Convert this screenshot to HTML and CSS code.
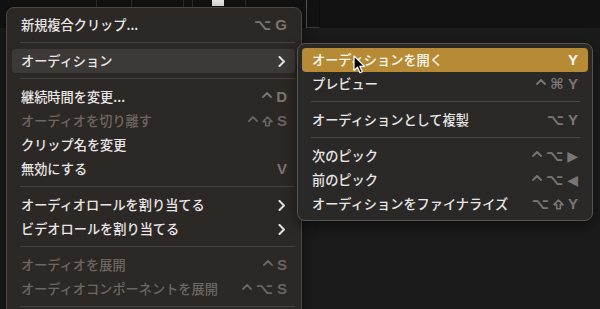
FILE: index.html
```html
<!DOCTYPE html>
<html lang="ja">
<head>
    <meta charset="utf-8" />
    <title>オーディション</title>
    <link rel="stylesheet" href="styles.css">
</head>
<body>
<div class="ruler">
    <span class="cell w1"></span>
    <span class="cell w2"></span>
    <span class="cell w3"></span>
    <span class="cell w4"></span>
    <span class="cell w5"><i class="playhead"></i></span>
    <span class="cell w6"></span>
    <span class="cell w7"></span>
</div>

<div class="menu main">
    <div class="item"><span class="label">新規複合クリップ...</span><span class="key"><span>⌥</span><span>G</span></span></div>
    <div class="sep"></div>
    <div class="item hover"><span class="label">オーディション</span><svg class="chev" width="8" height="11" viewBox="0 0 8 11"><path d="M1.5 1 L6 5.5 L1.5 10" /></svg></div>
    <div class="sep"></div>
    <div class="item"><span class="label">継続時間を変更...</span><span class="key"><svg class="ctrl" width="10" height="6" viewBox="0 0 10 6"><path d="M1 5 L5 1 L9 5" /></svg><span>D</span></span></div>
    <div class="item off"><span class="label">オーディオを切り離す</span><span class="key"><svg class="ctrl" width="10" height="6" viewBox="0 0 10 6"><path d="M1 5 L5 1 L9 5" /></svg><svg class="shift" width="11" height="11" viewBox="0 0 11 11"><path d="M5.5 1 L10 5.6 L7.3 5.6 L7.3 9.8 L3.7 9.8 L3.7 5.6 L1 5.6 Z" /></svg><span>S</span></span></div>
    <div class="item"><span class="label">クリップ名を変更</span></div>
    <div class="item"><span class="label">無効にする</span><span class="key"><span>V</span></span></div>
    <div class="sep"></div>
    <div class="item"><span class="label">オーディオロールを割り当てる</span><svg class="chev" width="8" height="11" viewBox="0 0 8 11"><path d="M1.5 1 L6 5.5 L1.5 10" /></svg></div>
    <div class="item"><span class="label">ビデオロールを割り当てる</span><svg class="chev" width="8" height="11" viewBox="0 0 8 11"><path d="M1.5 1 L6 5.5 L1.5 10" /></svg></div>
    <div class="sep"></div>
    <div class="item off"><span class="label">オーディオを展開</span><span class="key"><svg class="ctrl" width="10" height="6" viewBox="0 0 10 6"><path d="M1 5 L5 1 L9 5" /></svg><span>S</span></span></div>
    <div class="item off"><span class="label">オーディオコンポーネントを展開</span><span class="key"><svg class="ctrl" width="10" height="6" viewBox="0 0 10 6"><path d="M1 5 L5 1 L9 5" /></svg><span>⌥</span><span>S</span></span></div>
    <div class="sep"></div>
    <div class="item off"><span class="label">&nbsp;</span></div>
</div>

<div class="menu sub">
    <div class="item active"><span class="label">オーディションを開く</span><span class="key"><span>Y</span></span></div>
    <div class="item"><span class="label">プレビュー</span><span class="key"><svg class="ctrl" width="10" height="6" viewBox="0 0 10 6"><path d="M1 5 L5 1 L9 5" /></svg><span>⌘</span><span>Y</span></span></div>
    <div class="sep"></div>
    <div class="item"><span class="label">オーディションとして複製</span><span class="key"><span>⌥</span><span>Y</span></span></div>
    <div class="sep"></div>
    <div class="item"><span class="label">次のピック</span><span class="key"><svg class="ctrl" width="10" height="6" viewBox="0 0 10 6"><path d="M1 5 L5 1 L9 5" /></svg><span>⌥</span><span class="tri">▶</span></span></div>
    <div class="item"><span class="label">前のピック</span><span class="key"><svg class="ctrl" width="10" height="6" viewBox="0 0 10 6"><path d="M1 5 L5 1 L9 5" /></svg><span>⌥</span><span class="tri">◀</span></span></div>
    <div class="item"><span class="label">オーディションをファイナライズ</span><span class="key"><span>⌥</span><svg class="shift" width="11" height="11" viewBox="0 0 11 11"><path d="M5.5 1 L10 5.6 L7.3 5.6 L7.3 9.8 L3.7 9.8 L3.7 5.6 L1 5.6 Z" /></svg><span>Y</span></span></div>
</div>

<svg class="cursor" width="13" height="19" viewBox="0 0 13 19">
    <path d="M1 1 L1 15.5 L4.5 12.2 L7 17.8 L9.3 16.8 L6.9 11.4 L11.6 11.4 Z" />
</svg>
</body>
</html>
```

FILE: styles.css
```css
html, body {margin:0;padding:0;}
body {position:relative;width:600px;height:309px;overflow:hidden;background-color:#1b1b1b;font:500 13.2px/24px "Noto Sans CJK JP", "Noto Sans", sans-serif;color:#e9e7e5;}

.ruler {display:flex;height:28px;background-color:#121212;}
.ruler .cell {flex:none;height:100%;border-right:1px solid #2b2b2b;}
.ruler .w1 {width:96px;}
.ruler .w2 {width:34px;}
.ruler .w3 {width:51px;}
.ruler .w4 {width:8px;}
.ruler .w5 {width:52px;}
.ruler .w6 {width:60px;border-right-color:#55524f;}
.ruler .w7 {width:12px;border-bottom:1px solid #3a3836;height:27px;border-right-color:#0c0c0c;}
.ruler .playhead {display:block;width:12px;height:6px;margin-left:19px;background-color:#e8e8e8;}

.menu {position:absolute;box-sizing:border-box;width:296px;border:1px solid #4c4743;border-radius:8px;box-shadow:0 4px 14px rgba(0,0,0,.5);}
.main {top:7px;left:6px;padding:5px 0;background-color:#2c2825;}
.sub {top:43px;left:297px;padding:4px 0;background-color:#2a2928;border-color:#58544f;}

.item {display:flex;align-items:center;height:24px;margin:0 6px 0 5px;padding:0 8px 0 9px;border-radius:4px;white-space:nowrap;}
.sub .item {margin:0 4px;padding:0 10px 0 10px;}
.item .label {flex:1;}

.key {display:flex;align-items:center;gap:4px;height:24px;font:bold 15px/24px "Liberation Sans", "DejaVu Sans", sans-serif;color:#7a7673;}
.key .ctrl {align-self:flex-start;margin-top:7px;}
.key .ctrl path,
.key .shift path {fill:none;stroke:currentColor;stroke-width:1.8;stroke-linejoin:round;stroke-linecap:round;}
.key .shift path {stroke-width:1.6;}
.key .tri {font-size:14px;font-family:"DejaVu Sans", sans-serif;}

.item.hover {background-color:#3c3937;}
.item.active {background-color:#b78b35;color:#fbf8f2;}
.item.active .key {color:#fbf8f2;}
.item.off {color:#6c6764;}
.item.off .key {color:#6a6562;}
.chev {display:block;margin-right:1px;}
.chev path {fill:none;stroke:#e3e1df;stroke-width:2;stroke-linecap:round;stroke-linejoin:round;}

.sep {height:12px;margin:0 6px 0 13px;background:linear-gradient(#47423e,#47423e) no-repeat 0 5px/100% 1px;}
.sub .sep {margin:0 12px 0 13px;background-image:linear-gradient(#4a4845,#4a4845);}

.cursor {position:absolute;left:353px;top:55px;}
.cursor path {fill:#000;stroke:#fff;stroke-width:1.2;stroke-linejoin:round;}
```
